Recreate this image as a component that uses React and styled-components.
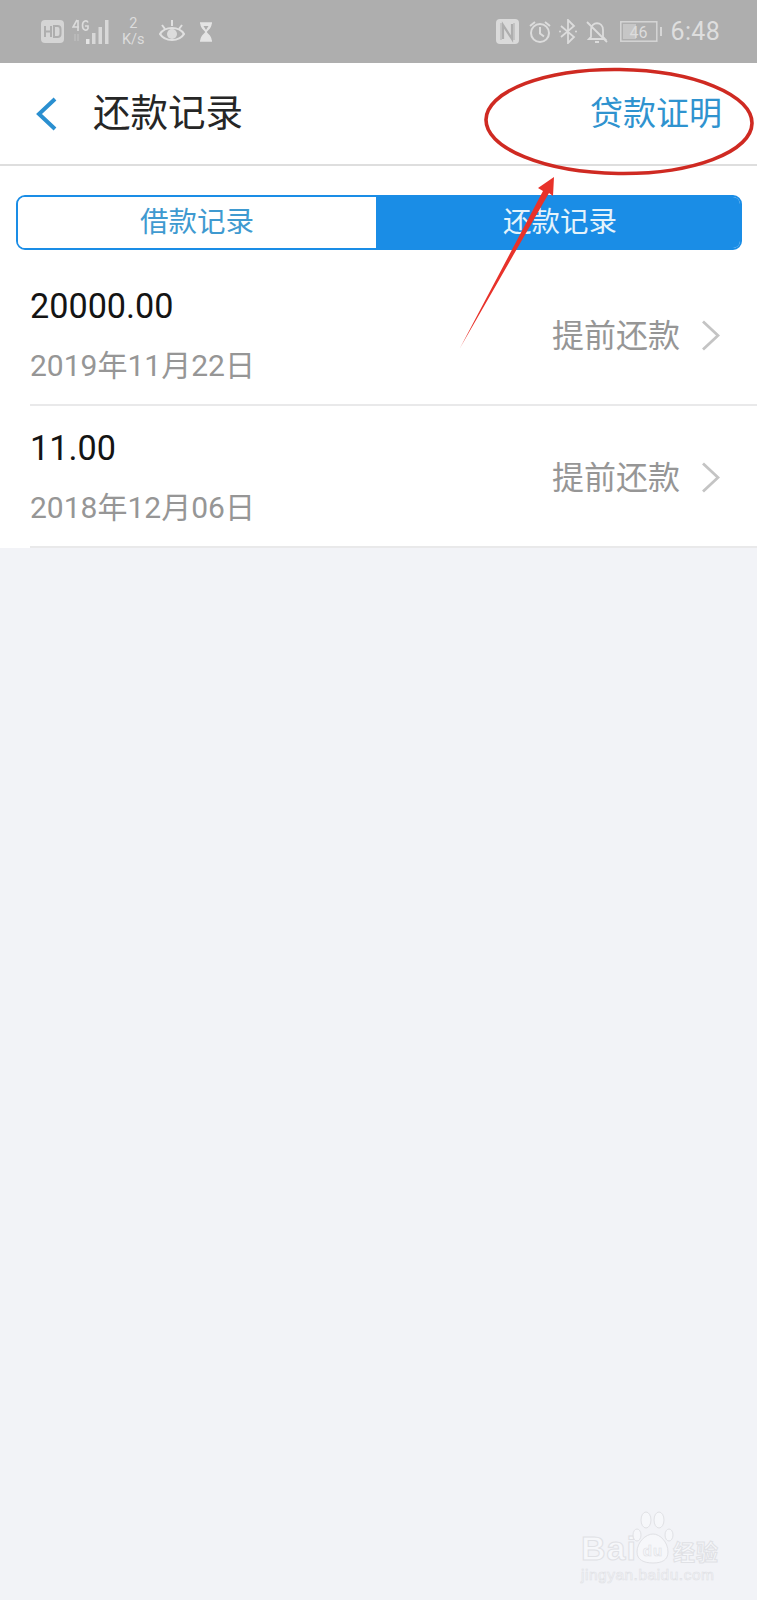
import React from "react";
import styled, { createGlobalStyle } from "styled-components";

const Global = createGlobalStyle`
  html, body { margin: 0; padding: 0; background: #f2f3f7; }
  * { box-sizing: border-box; }
  #root { width: 757px; height: 1600px; }
`;

const sans = `Roboto, "Noto Sans CJK SC", sans-serif`;

const Page = styled.div`
  position: relative; width: 757px; height: 1600px; overflow: hidden;
  background: #f2f3f7; font-family: ${sans};
`;
const StatusBar = styled.div`
  height: 63px; background: #aeaeae; color: #dcdcdc;
  display: flex; align-items: center; justify-content: space-between;
  padding: 0 37px 0 41px;
`;
const StatusGroup = styled.div`display: flex; align-items: center;`;
const Clock = styled.span`font-size: 25px; letter-spacing: .3px; margin-left: 9px; color: #dedede;`;
const Speed = styled.div`
  display: flex; flex-direction: column; align-items: center;
  font-size: 14.5px; line-height: 16px; margin: 0 14px 0 12px; color: #dcdcdc;
`;
const Header = styled.header`
  height: 103px; background: #fff; border-bottom: 2px solid #dedede;
  display: flex; align-items: center; justify-content: space-between;
  padding: 0 35px 0 34px;
`;
const HeaderLeft = styled.div`display: flex; align-items: center; gap: 35px;`;
const Title = styled.h1`margin: 0; font-size: 37.5px; font-weight: 400; color: #262626; line-height: 1;`;
const HeaderAction = styled.span`font-size: 33px; color: #2f93cf; line-height: 1;`;
const Content = styled.div`background: #fff; padding-top: 29px;`;
const Tabs = styled.div`
  margin: 0 15px 0 16px; height: 55px; display: grid; grid-template-columns: 358px 1fr;
  border-radius: 9px; overflow: hidden; border: 2px solid #1a8de6;
`;
const Tab = styled.div`
  display: flex; align-items: center; justify-content: center;
  font-size: 28.5px; line-height: 1; padding-top: 2px;
  padding-left: ${p => (p.$active ? "4px" : "0")};
  background: ${p => (p.$active ? "#1a8de6" : "#fff")};
  color: ${p => (p.$active ? "#e4f3fb" : "#3f9ad0")};
`;
const Row = styled.div`
  height: ${p => p.$h}px; margin-left: 30px; padding: ${p => p.$pt}px 37px 0 0;
  border-bottom: 2px solid #e9e9ea;
  display: flex; align-items: center; justify-content: space-between;
`;
const RowInfo = styled.div`display: flex; flex-direction: column; gap: 22px; margin-top: 3px;`;
const Amount = styled.div`font-size: 34.2px; line-height: 38px; color: #141414;`;
const DateText = styled.div`font-size: 30px; line-height: 38px; color: #969696;`;
const RowAction = styled.div`display: flex; align-items: center; gap: 21px; margin-top: 3px;`;
const ActionLabel = styled.span`font-size: 32px; line-height: 1; color: #969696;`;
const Annotation = styled.svg`position: absolute; left: 0; top: 0; pointer-events: none;`;
const Watermark = styled.div`
  position: absolute; left: 581px; top: 1515px; width: 160px; height: 85px;
  color: #f6f7fa;
`;
const WmLogo = styled.div`
  display: flex; align-items: flex-end; font-family: "Liberation Sans", sans-serif;
  font-size: 34px; font-weight: 700; line-height: 34px; height: 50px;
  -webkit-text-stroke: 1px #e0e1e5; letter-spacing: 1px;
`;
const WmCn = styled.span`font-family: "Noto Sans CJK SC", sans-serif; font-size: 22px; line-height: 30px; margin-left: 2px;`;
const WmUrl = styled.div`
  font-family: "Liberation Sans", sans-serif; font-size: 15.5px; line-height: 18px;
  margin-top: 1px; -webkit-text-stroke: .6px #e0e1e5; letter-spacing: .5px;
`;
const Paw = styled.svg`margin: 0 -3px 0 -5px;`;

const S = ({ w, h, ml = 0, children }) => (
  <svg width={w} height={h} viewBox={`0 0 ${w} ${h}`} style={{ marginLeft: ml }}>{children}</svg>
);

const Chevron = () => (
  <svg width="19" height="31" viewBox="0 0 19 31">
    <path d="M2 1.500 L17 15.500 L2 29.500" fill="none" stroke="#c4c4c4" strokeWidth="2.800" />
  </svg>
);

const records = [
  { amount: "20000.00", date: "2019年11月22日", h: 156, pt: 14 },
  { amount: "11.00", date: "2018年12月06日", h: 142, pt: 0 },
];

export default function App() {
  return (
    <Page>
      <Global />
      <StatusBar>
        <StatusGroup>
          <S w={23} h={23}>
            <rect x="0" y="0" width="23" height="23" rx="4" fill="#d5d5d5" />
            <path d="M4 6v11M10 6v11M4 11.500h6M13 6v11h3.500a3 3 0 0 0 3-3V9a3 3 0 0 0-3-3z" stroke="#aeaeae" strokeWidth="2" fill="none" />
          </S>
          <S w={38} h={26} ml={8}>
            <path d="M5 1 1 8h6M6 1v11M16 3.500C15 1 10.500 1 10.500 6.500s4.500 5.500 5.500 3V7h-3" fill="none" stroke="#dcdcdc" strokeWidth="1.600" />
            <path d="M3 15v7M6 15v7" stroke="#bdbdbd" strokeWidth="1.500" />
            <rect x="14" y="20" width="3.500" height="5" fill="#e4e4e4" />
            <rect x="20" y="14" width="3.500" height="11" fill="#d8d8d8" />
            <rect x="26.500" y="8" width="3.500" height="17" fill="#d8d8d8" />
            <rect x="33" y="1" width="3.500" height="24" fill="#d8d8d8" />
          </S>
          <Speed><span>2</span><span>K/s</span></Speed>
          <S w={26} h={25}>
            <path d="M1 15C6 7 20 7 25 15 20 23 6 23 1 15Z" fill="none" stroke="#e0e0e0" strokeWidth="2.200" />
            <circle cx="13" cy="15" r="5" fill="#dcdcdc" />
            <path d="M3 6l3 4M13 1v6M23 6l-3 4" stroke="#e0e0e0" strokeWidth="2" />
          </S>
          <S w={14} h={20} ml={14}>
            <path d="M1 1h12M1 19h12M2 1c0 6 4 6 5 9-1 3-5 3-5 9h10c0-6-4-6-5-9 1-3 5-3 5-9z" fill="#e4e4e4" stroke="#e4e4e4" strokeWidth="1.500" />
            <path d="M4.500 4h5L7 8z" fill="#aeaeae" />
          </S>
        </StatusGroup>
        <StatusGroup>
          <S w={23} h={25}>
            <rect width="23" height="25" rx="4" fill="#dadada" />
            <path d="M5 4v17M18 4v17" stroke="#aeaeae" strokeWidth="1" />
            <path d="M7 20V6l9 14V5" fill="none" stroke="#aeaeae" strokeWidth="2.200" />
          </S>
          <S w={22} h={24} ml={10}>
            <circle cx="11" cy="13" r="9" fill="none" stroke="#dcdcdc" strokeWidth="2" />
            <path d="M11 7v6.500l4 3M1 6l5-4M21 6l-5-4" fill="none" stroke="#dcdcdc" strokeWidth="2" />
          </S>
          <S w={18} h={25} ml={8}>
            <path d="M2 7l13 11-6 6V1l6 6L2 18" fill="none" stroke="#dcdcdc" strokeWidth="1.800" />
            <circle cx="1" cy="12.500" r="1" fill="#dcdcdc" /><circle cx="17" cy="12.500" r="1" fill="#dcdcdc" />
          </S>
          <S w={22} h={24} ml={9}>
            <path d="M5 10c0-9 12-9 12 0v7l2 2H3l2-2zM9 22h4M1 2l20 20" fill="none" stroke="#dcdcdc" strokeWidth="1.800" />
          </S>
          <S w={42} h={21} ml={12}>
            <rect x=".8" y=".8" width="36" height="19.400" fill="none" stroke="#d6d6d6" strokeWidth="1.500" />
            <rect x="3" y="3" width="13" height="15" fill="#c6c6c6" />
            <rect x="40" y="6" width="2" height="9" fill="#d6d6d6" />
            <text x="18.500" y="16.500" fontSize="16" fill="#dcdcdc" textAnchor="middle" fontFamily="Roboto, sans-serif">46</text>
          </S>
          <Clock>6:48</Clock>
        </StatusGroup>
      </StatusBar>

      <Header>
        <HeaderLeft>
          <svg width="24" height="34" viewBox="0 0 24 34">
            <path d="M21 2 5 17l16 15" fill="none" stroke="#2a8fd0" strokeWidth="4" />
          </svg>
          <Title>还款记录</Title>
        </HeaderLeft>
        <HeaderAction>贷款证明</HeaderAction>
      </Header>

      <Content>
        <Tabs>
          <Tab>借款记录</Tab>
          <Tab $active>还款记录</Tab>
        </Tabs>
        {records.map(r => (
          <Row key={r.amount} $h={r.h} $pt={r.pt}>
            <RowInfo>
              <Amount>{r.amount}</Amount>
              <DateText>{r.date}</DateText>
            </RowInfo>
            <RowAction>
              <ActionLabel>提前还款</ActionLabel>
              <Chevron />
            </RowAction>
          </Row>
        ))}
      </Content>

      <Annotation width="757" height="400" viewBox="0 0 757 400">
        <ellipse cx="619" cy="121.500" rx="133" ry="52" fill="none" stroke="#cf2a22" strokeWidth="3.600" transform="rotate(0.800 619 121.500)" />
        <path d="M460 348 L543 191 L538 188 L554 177 L553 196 L549 193 Z" fill="#e8322a" />
      </Annotation>

      <Watermark>
        <WmLogo>
          Bai
          <Paw width="42" height="56" viewBox="0 0 42 56">
            <g fill="#f6f7fa" stroke="#e0e1e5" strokeWidth="1">
              <ellipse cx="5" cy="26" rx="4" ry="6" />
              <ellipse cx="14" cy="11" rx="5" ry="8" />
              <ellipse cx="27" cy="11" rx="5" ry="8" />
              <ellipse cx="37" cy="26" rx="4" ry="6" />
              <path d="M21 25c7 0 15 8 15 18 0 8-6 11-15 11S5 51 5 43c0-10 9-18 16-18z" />
              <text x="21" y="47" fontSize="15" fontWeight="700" textAnchor="middle" strokeWidth=".6">du</text>
            </g>
          </Paw>
          <WmCn>经验</WmCn>
        </WmLogo>
        <WmUrl>jingyan.baidu.com</WmUrl>
      </Watermark>
    </Page>
  );
}
